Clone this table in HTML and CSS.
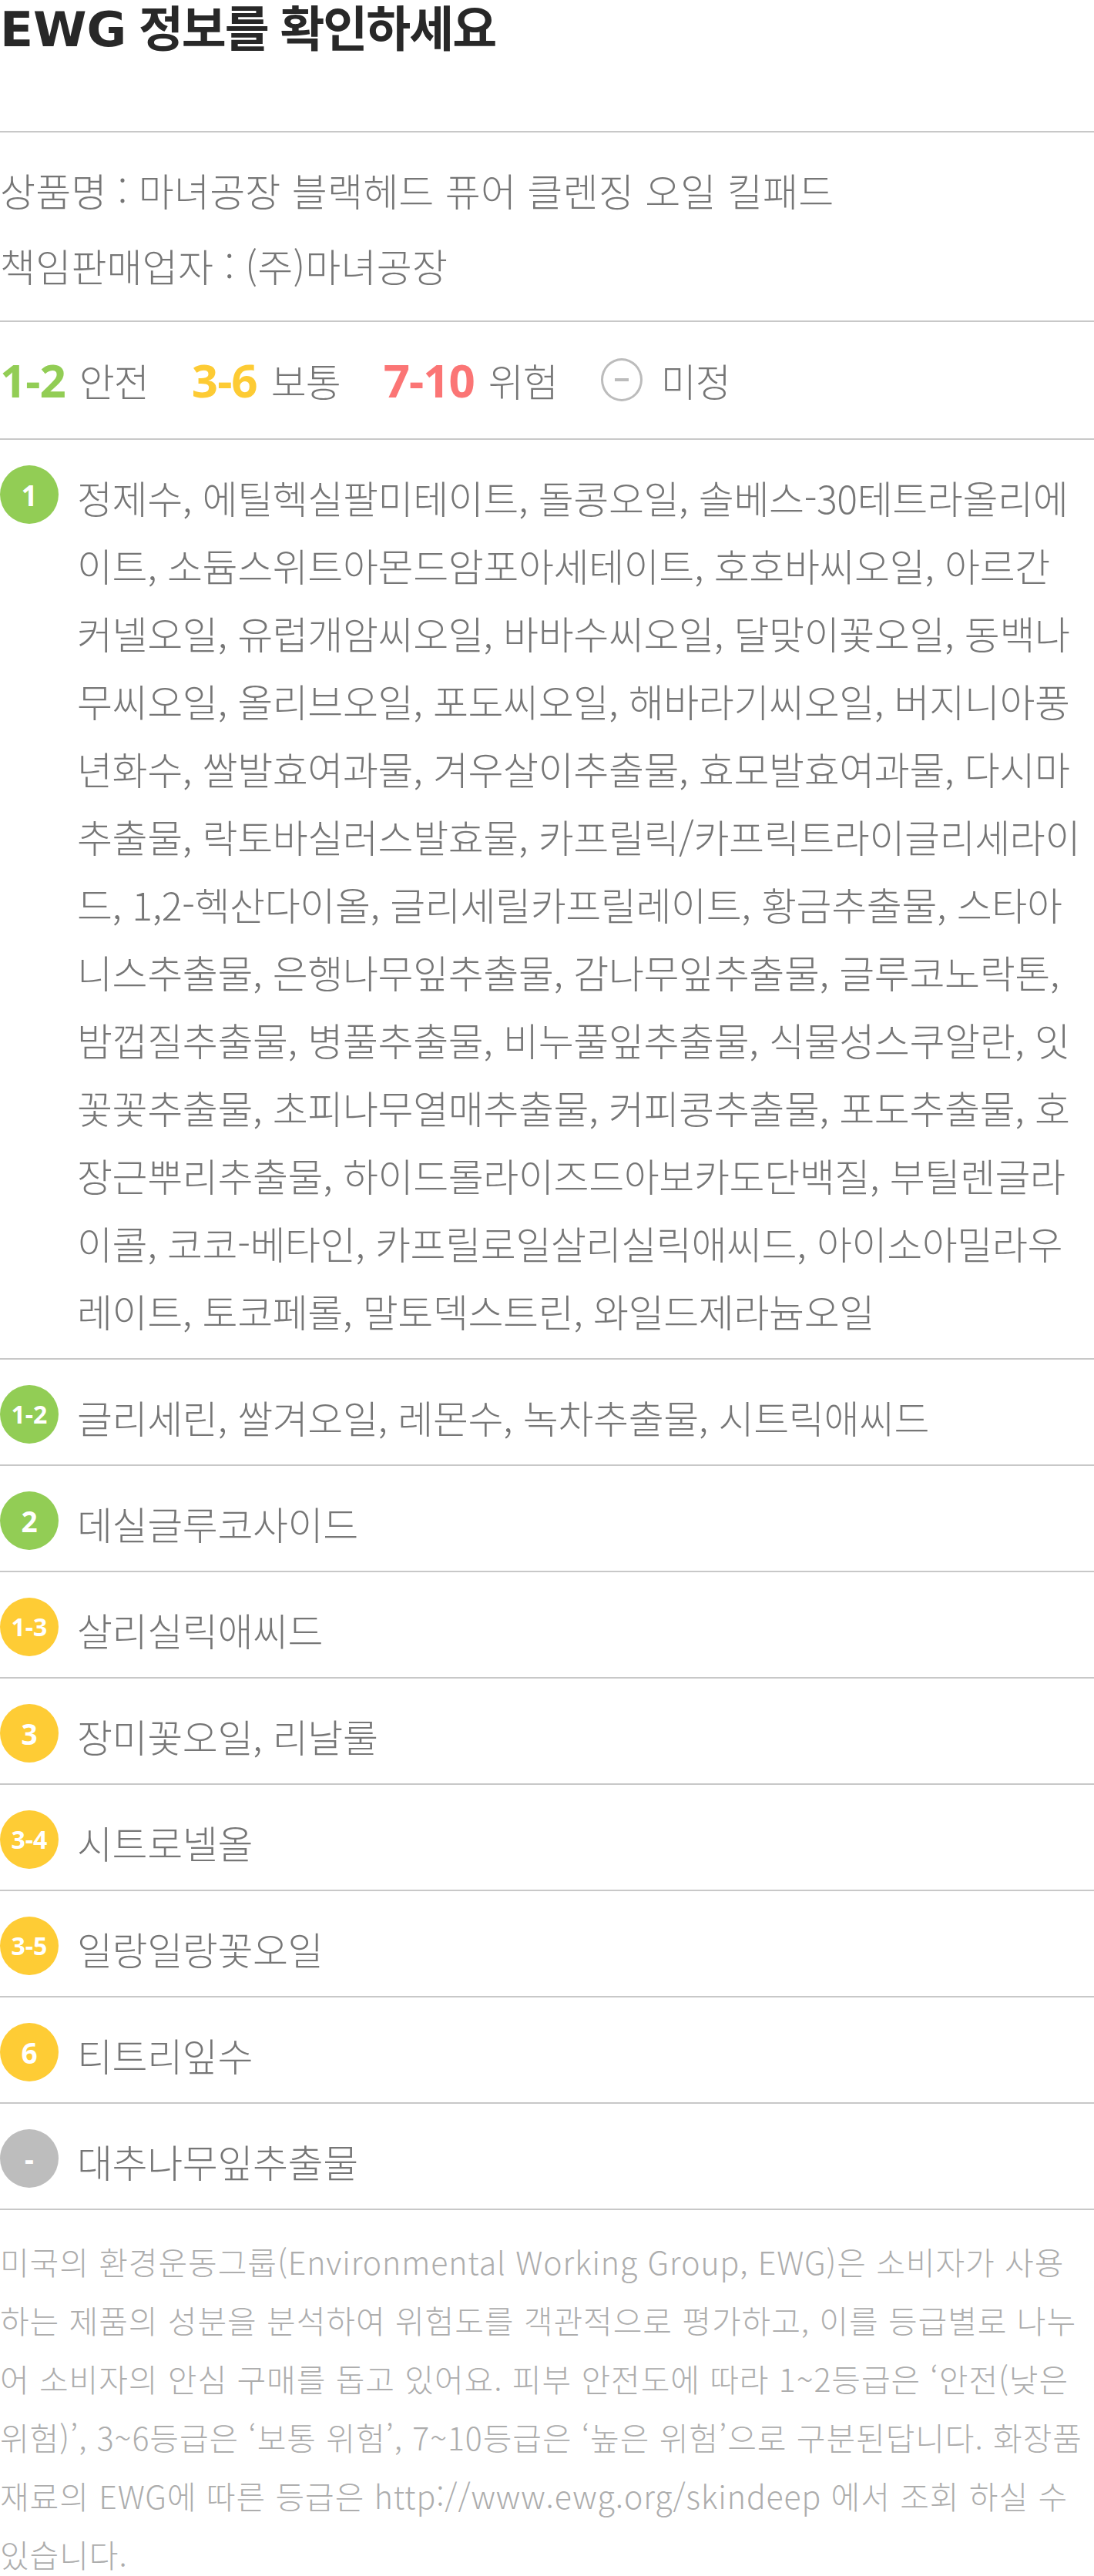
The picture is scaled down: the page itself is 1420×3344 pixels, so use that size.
FILE: index.html
```html
<!DOCTYPE html>
<html lang="ko">
<head>
<meta charset="utf-8">
<title>EWG 정보를 확인하세요</title>
<link rel="stylesheet" href="styles.css">
</head>
<body>
<section class="ewg">
  <h2 class="ewg-title"><span class="ewg-title__latin">EWG</span> 정보를 확인하세요</h2>

  <div class="ewg-product">
    <p class="ewg-product__line">상품명 : 마녀공장 블랙헤드 퓨어 클렌징 오일 킬패드</p>
    <p class="ewg-product__line">책임판매업자 : (주)마녀공장</p>
  </div>

  <div class="ewg-legend">
    <div class="legend-item"><span class="legend-item__num num-green">1-2</span><span class="legend-item__label">안전</span></div>
    <div class="legend-item"><span class="legend-item__num num-yellow">3-6</span><span class="legend-item__label">보통</span></div>
    <div class="legend-item"><span class="legend-item__num num-red">7-10</span><span class="legend-item__label">위험</span></div>
    <div class="legend-item legend-item--unknown"><span class="unknown-icon"></span><span class="legend-item__label">미정</span></div>
  </div>

  <ul class="ewg-list">
    <li class="ing">
      <span class="badge badge--green">1</span>
      <p class="ing__text">정제수, 에틸헥실팔미테이트, 돌콩오일, 솔베스-30테트라올리에<br>이트, 소듐스위트아몬드암포아세테이트, 호호바씨오일, 아르간<br>커넬오일, 유럽개암씨오일, 바바수씨오일, 달맞이꽃오일, 동백나<br>무씨오일, 올리브오일, 포도씨오일, 해바라기씨오일, 버지니아풍<br>년화수, 쌀발효여과물, 겨우살이추출물, 효모발효여과물, 다시마<br>추출물, 락토바실러스발효물, 카프릴릭/카프릭트라이글리세라이<br>드, 1,2-헥산다이올, 글리세릴카프릴레이트, 황금추출물, 스타아<br>니스추출물, 은행나무잎추출물, 감나무잎추출물, 글루코노락톤,<br>밤껍질추출물, 병풀추출물, 비누풀잎추출물, 식물성스쿠알란, 잇<br>꽃꽃추출물, 초피나무열매추출물, 커피콩추출물, 포도추출물, 호<br>장근뿌리추출물, 하이드롤라이즈드아보카도단백질, 부틸렌글라<br>이콜, 코코-베타인, 카프릴로일살리실릭애씨드, 아이소아밀라우<br>레이트, 토코페롤, 말토덱스트린, 와일드제라늄오일</p>
    </li>
    <li class="ing">
      <span class="badge badge--green badge--sm">1-2</span>
      <p class="ing__text">글리세린, 쌀겨오일, 레몬수, 녹차추출물, 시트릭애씨드</p>
    </li>
    <li class="ing">
      <span class="badge badge--green">2</span>
      <p class="ing__text">데실글루코사이드</p>
    </li>
    <li class="ing">
      <span class="badge badge--yellow badge--sm">1-3</span>
      <p class="ing__text">살리실릭애씨드</p>
    </li>
    <li class="ing">
      <span class="badge badge--yellow">3</span>
      <p class="ing__text">장미꽃오일, 리날룰</p>
    </li>
    <li class="ing">
      <span class="badge badge--yellow badge--sm">3-4</span>
      <p class="ing__text">시트로넬올</p>
    </li>
    <li class="ing">
      <span class="badge badge--yellow badge--sm">3-5</span>
      <p class="ing__text">일랑일랑꽃오일</p>
    </li>
    <li class="ing">
      <span class="badge badge--yellow">6</span>
      <p class="ing__text">티트리잎수</p>
    </li>
    <li class="ing">
      <span class="badge badge--gray">-</span>
      <p class="ing__text">대추나무잎추출물</p>
    </li>
  </ul>

  <p class="ewg-note">미국의 환경운동그룹(Environmental Working Group, EWG)은 소비자가 사용<br>하는 제품의 성분을 분석하여 위험도를 객관적으로 평가하고, 이를 등급별로 나누<br>어 소비자의 안심 구매를 돕고 있어요. 피부 안전도에 따라 1~2등급은 ‘안전(낮은<br>위험)’, 3~6등급은 ‘보통 위험’, 7~10등급은 ‘높은 위험’으로 구분된답니다. 화장품<br>재료의 EWG에 따른 등급은 http://www.ewg.org/skindeep 에서 조회 하실 수<br>있습니다.</p>
</section>
</body>
</html>
```

FILE: styles.css
```css
html, body {
  margin: 0;
  padding: 0;
  background: #ffffff;
}

body {
  font-family: "Noto Sans CJK KR", "Noto Sans", sans-serif;
  color: #767676;
}

.ewg {
  width: 1420px;
}

/* Title */
.ewg-title {
  margin: 0;
  height: 66px;
  padding-bottom: 104px;
  font-size: 63px;
  line-height: 66px;
  font-weight: 700;
  color: #282828;
  letter-spacing: -2px;
  white-space: nowrap;
}

.ewg-title__latin {
  font-family: "DejaVu Sans", "Noto Sans", sans-serif;
  font-size: 63px;
  line-height: 0;
  letter-spacing: 0;
}

/* Product info */
.ewg-product {
  border-top: 2px solid #c8c8c8;
  padding: 25px 0 23px;
}

.ewg-product__line {
  margin: 0;
  font-size: 50px;
  line-height: 98px;
  font-weight: 300;
  letter-spacing: 0.2px;
  white-space: nowrap;
}

/* Legend */
.ewg-legend {
  border-top: 2px solid #c8c8c8;
  padding: 45px 0 46px;
  display: flex;
  align-items: center;
  column-gap: 56px;
}

.legend-item {
  display: flex;
  align-items: center;
  column-gap: 18px;
  line-height: 60px;
}

.legend-item--unknown {
  column-gap: 24px;
}

.legend-item__num {
  font-family: "Noto Sans", sans-serif;
  font-weight: 700;
  font-size: 60px;
  letter-spacing: -1px;
}

.num-green { color: #92cd55; }
.num-yellow { color: #fdcb34; }
.num-red { color: #fb7575; }

.legend-item__label {
  font-size: 50px;
  font-weight: 300;
  letter-spacing: -1px;
}

.unknown-icon {
  position: relative;
  width: 48px;
  height: 50px;
  border: 3px solid #bcbcbc;
  border-radius: 50%;
}

.unknown-icon::after {
  content: "";
  position: absolute;
  left: 50%;
  top: 50%;
  width: 18px;
  height: 4px;
  margin: -2px 0 0 -9px;
  background: #bcbcbc;
}

/* Ingredient list */
.ewg-list {
  margin: 0;
  padding: 0;
  list-style: none;
}

.ing {
  border-top: 2px solid #c8c8c8;
  padding: 30px 0 18px;
  display: flex;
  align-items: flex-start;
  column-gap: 24px;
}

.badge {
  flex: 0 0 76px;
  height: 76px;
  margin-top: 3px;
  border-radius: 50%;
  display: flex;
  align-items: center;
  justify-content: center;
  color: #ffffff;
  font-family: "Noto Sans", sans-serif;
  font-weight: 700;
  font-size: 37px;
  line-height: 1;
}

.badge--sm {
  font-size: 32px;
  letter-spacing: 0;
}

.badge--green { background: #92cd55; }
.badge--yellow { background: #fecc35; }
.badge--gray { background: #bdbdbd; }

.ing__text {
  margin: 0;
  flex: 1;
  font-size: 50px;
  line-height: 88px;
  font-weight: 300;
  letter-spacing: -0.4px;
  white-space: nowrap;
}

/* Note */
.ewg-note {
  margin: 0;
  border-top: 2px solid #c8c8c8;
  padding-top: 28px;
  font-size: 41px;
  line-height: 76px;
  font-weight: 300;
  color: #adadad;
  letter-spacing: 0.9px;
  white-space: nowrap;
}
```
